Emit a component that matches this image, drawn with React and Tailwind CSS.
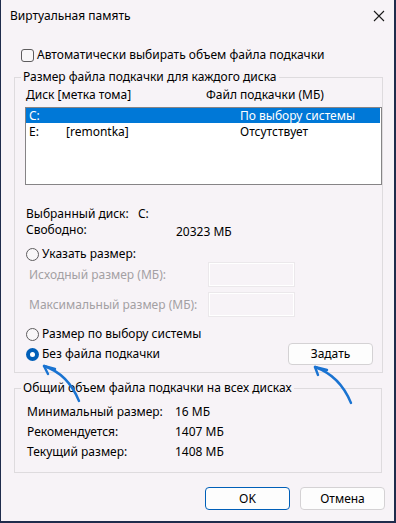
import React from 'react'

const FONT = { fontFamily: '"Noto Sans", "Open Sans", Arial, sans-serif' }

function Radio({ checked, label }) {
  return (
    <div className="flex h-4 items-center">
      {checked ? (
        <span className="flex size-[13px] items-center justify-center rounded-full bg-[#005fb8]">
          <span className="size-[5px] rounded-full bg-white" />
        </span>
      ) : (
        <span className="size-[13px] rounded-full border border-[#5e5c5e] bg-[#f9f7f9]" />
      )}
      <span className="ml-[3px] leading-4">{label}</span>
    </div>
  )
}

function Group({ title, className, children }) {
  return (
    <fieldset className={`ml-[13px] w-[368px] border border-[#dedbde] ${className}`}>
      <legend className="ml-[6px] px-[2px] leading-4">{title}</legend>
      {children}
    </fieldset>
  )
}

function SizeInput({ label, className }) {
  return (
    <div className={`flex h-[25px] items-center pl-[14px] ${className}`}>
      <span className="w-[179px] text-[#a3a0a3]">{label}</span>
      <span className="h-[25px] w-[87px] border border-[#ebe8eb] shadow-[inset_0_0_0_1px_#ffffff]" />
    </div>
  )
}

function Button({ children, primary }) {
  return (
    <button
      className={`h-[23px] w-[85px] rounded-[4px] border bg-[#fdfdfd] text-center leading-4 text-black ${
        primary ? 'border-[#005fb8]' : 'border-[#d4d2d4]'
      }`}
    >
      {children}
    </button>
  )
}

function Arrows() {
  return (
    <svg className="pointer-events-none absolute left-0 top-0" width="396" height="523" fill="none" stroke="#1a73d1" strokeWidth="2.4" strokeLinecap="round">
      <path d="M79 401 Q68 374 44 366" />
      <path d="M44 366 L55 369 M44 366 L48 374" />
      <path d="M351 403 Q340 376 315 367" />
      <path d="M315 367 L327 370 M315 367 L318 375" />
    </svg>
  )
}

export default function App() {
  return (
    <div className="relative h-[523px] w-[396px] bg-[#1f2c4c] text-[12px] text-black" style={FONT}>
      <div className="ml-px h-[521px] w-[393px] bg-[#f7f3f7]">
        <div className="flex h-8 items-center justify-between pl-[9px] pr-[9px]">
          <span className="leading-4">Виртуальная память</span>
          <svg width="12" height="12" viewBox="0 0 12 12" stroke="#1a1a1a" strokeWidth="1.1">
            <path d="M1 1 L11 11 M11 1 L1 11" />
          </svg>
        </div>

        <div className="mt-[15px] flex h-4 items-center pl-[20px]">
          <span className="size-[13px] rounded-[3px] border border-[#5e5c5e] bg-[#f9f7f9]" />
          <span className="ml-[3px] leading-4">Автоматически выбирать объем файла подкачки</span>
        </div>

        <Group title="Размер файла подкачки для каждого диска" className="mt-[6px] pb-[7px]">
          <div className="mt-[2px] flex h-4 pl-[11px] leading-4">
            <span className="w-[180px]">Диск [метка тома]</span>
            <span>Файл подкачки (МБ)</span>
          </div>

          <div className="ml-[10px] mt-[4px] h-[78px] w-[357px] border border-[#868486] bg-white">
            <div className="flex h-[15px] w-[354px] items-center bg-[#0078d7] pl-[3px] leading-[14px] text-white">
              <span className="w-[211px]">C:</span>
              <span>По выбору системы</span>
            </div>
            <div className="mt-px flex h-[15px] items-center pl-[3px] leading-[14px]">
              <span className="w-[37px]">E:</span>
              <span className="w-[174px]">[remontka]</span>
              <span>Отсутствует</span>
            </div>
          </div>

          <div className="mt-[21px] pl-[11px]">
            <div className="flex h-4 leading-4">
              <span className="w-[112px]">Выбранный диск:</span>
              <span>C:</span>
            </div>
            <div className="flex h-4 leading-4">
              <span className="w-[150px]">Свободно:</span>
              <span className="pt-[2px]">20323 МБ</span>
            </div>
          </div>

          <div className="mt-[8px] pl-[11px]">
            <Radio label="Указать размер:" />
          </div>
          <SizeInput label="Исходный размер (МБ):" />
          <SizeInput label="Максимальный размер (МБ):" className="mt-[5px]" />

          <div className="mt-[9px] pl-[11px]">
            <Radio label="Размер по выбору системы" />
          </div>
          <div className="mt-[1px] flex h-[22px] items-center justify-between pl-[11px] pr-[9px]">
            <Radio checked label="Без файла подкачки" />
            <button className="h-[22px] w-[85px] rounded-[4px] border border-[#d4d2d4] bg-[#fdfdfd] leading-4">
              Задать
            </button>
          </div>
        </Group>

        <Group title="Общий объем файла подкачки на всех дисках" className="mt-[7px] pb-[10px]">
          <div className="mt-[6px] pl-[12px]">
            {[
              ['Минимальный размер:', '16 МБ'],
              ['Рекомендуется:', '1407 МБ'],
              ['Текущий размер:', '1408 МБ'],
            ].map(([k, v]) => (
              <div key={k} className="flex h-5 items-center leading-4">
                <span className="w-[148px]">{k}</span>
                <span>{v}</span>
              </div>
            ))}
          </div>
        </Group>

        <div className="mt-[14px] flex justify-end gap-[10px] pr-[9px]">
          <Button primary>OK</Button>
          <Button>Отмена</Button>
        </div>
      </div>
      <Arrows />
    </div>
  )
}
